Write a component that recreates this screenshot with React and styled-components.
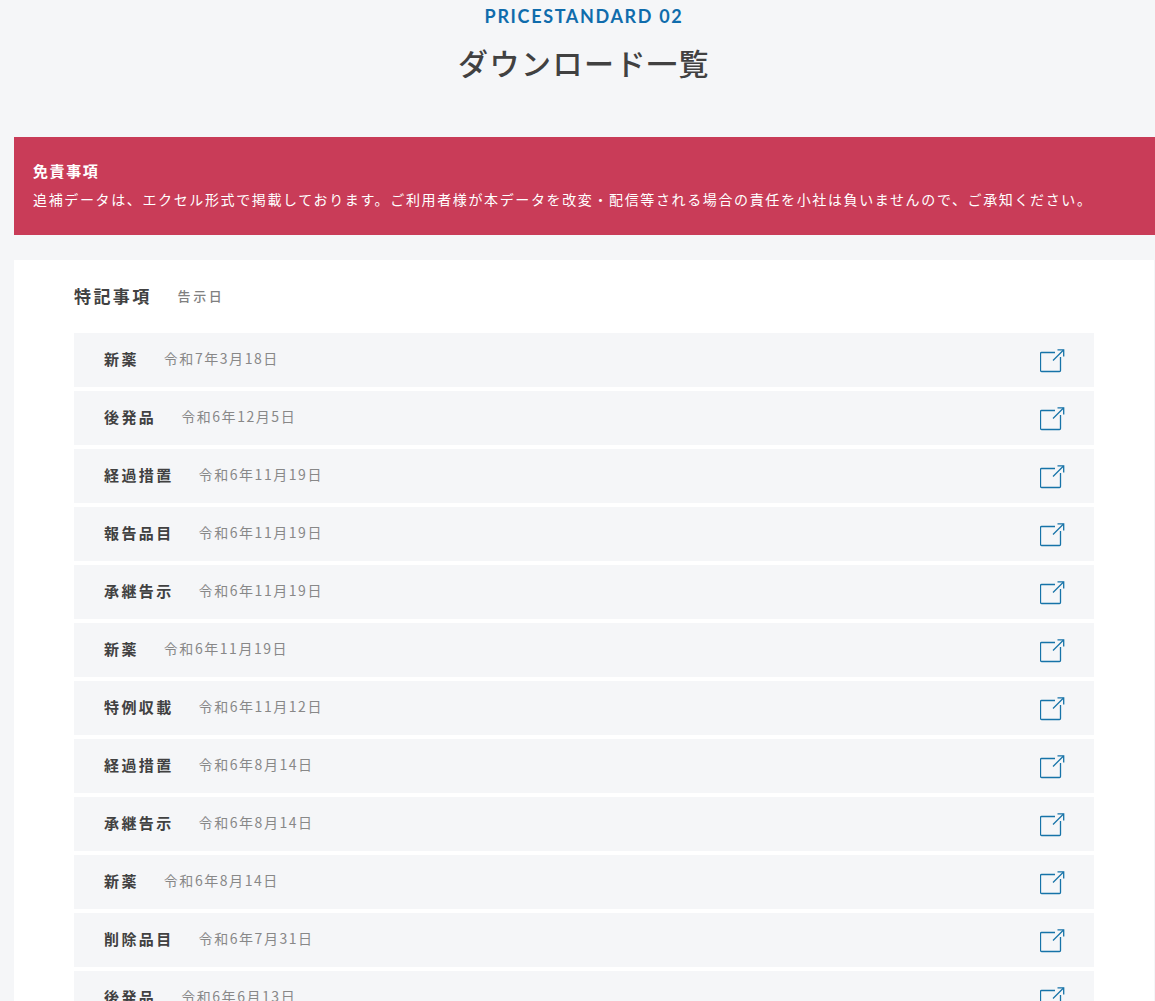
import React from "react";
import styled, { createGlobalStyle } from "styled-components";

const GlobalStyle = createGlobalStyle`
  html, body {
    margin: 0;
    padding: 0;
    height: 1001px;
    overflow: hidden;
    background-color: #f5f6f8;
    font-family: "Lato", "Noto Sans CJK JP", sans-serif;
    color: #414141;
  }
`;

const Page = styled.div`
  padding-left: 14px;
  padding-right: 1px;
`;

const Header = styled.header`
  height: 137px;
  text-align: center;

  p {
    margin: 0;
    padding-top: 5px;
    font-size: 18px;
    line-height: 22px;
    font-weight: 700;
    letter-spacing: 1.65px;
    color: #0f6cac;
  }

  h1 {
    margin: 14px 0 0;
    font-size: 30px;
    line-height: 45px;
    font-weight: 500;
    letter-spacing: 1.5px;
    color: #414141;
  }
`;

const Notice = styled.div`
  height: 98px;
  box-sizing: border-box;
  padding: 23px 19px 0;
  margin-right: -1px;
  background-color: #c93c58;
  color: #fff;

  strong {
    display: block;
    font-size: 15px;
    line-height: 22px;
    font-weight: 700;
    letter-spacing: 1.6px;
  }

  p {
    margin: 7px 0 0;
    font-size: 14px;
    line-height: 22px;
    font-weight: 400;
    letter-spacing: 1.63px;
    white-space: nowrap;
  }
`;

const Card = styled.section`
  margin-top: 25px;
  padding: 21px 60px 0;
  background-color: #fff;
`;

const ListHead = styled.div`
  display: flex;
  align-items: center;
  height: 29px;
  margin-bottom: 23px;

  h2 {
    margin: 0 26px 0 0;
    font-size: 17px;
    font-weight: 700;
    letter-spacing: 2.4px;
    color: #414141;
  }

  span {
    font-size: 13px;
    font-weight: 500;
    letter-spacing: 2.6px;
    color: #808080;
  }
`;

const List = styled.ul`
  display: flex;
  flex-direction: column;
  gap: 4px;
  margin: 0;
  padding: 0;
  list-style: none;
`;

const Row = styled.li`
  display: flex;
  align-items: center;
  height: 54px;
  padding: 0 29px 0 30px;
  background-color: #f5f6f8;
`;

const Name = styled.strong`
  margin-right: 25px;
  margin-bottom: 4px;
  font-size: 15px;
  font-weight: 700;
  letter-spacing: 2.4px;
  color: #414141;
`;

const DateText = styled.span`
  margin-bottom: 4px;
  font-family: "Noto Sans CJK JP", sans-serif;
  font-size: 14px;
  font-weight: 400;
  letter-spacing: 1.55px;
  color: #888;
`;

const LinkIcon = styled.svg`
  width: 25px;
  height: 24px;
  margin-left: auto;
  margin-top: 2px;
  fill: none;
  stroke: #1673a8;
  stroke-width: 1.3;
`;

const items = [
  ["新薬", "令和7年3月18日"],
  ["後発品", "令和6年12月5日"],
  ["経過措置", "令和6年11月19日"],
  ["報告品目", "令和6年11月19日"],
  ["承継告示", "令和6年11月19日"],
  ["新薬", "令和6年11月19日"],
  ["特例収載", "令和6年11月12日"],
  ["経過措置", "令和6年8月14日"],
  ["承継告示", "令和6年8月14日"],
  ["新薬", "令和6年8月14日"],
  ["削除品目", "令和6年7月31日"],
  ["後発品", "令和6年6月13日"],
];

const ExternalIcon = () => (
  <LinkIcon viewBox="0 0 25 24">
    <path d="M15 3.500H1.500a1 1 0 0 0-1 1v17a1 1 0 0 0 1 1h18a1 1 0 0 0 1-1V8" />
    <path d="M13 11.500L23.500 1" />
    <path d="M17.500 0.800H23.700V7.500" />
  </LinkIcon>
);

const App = () => {
  return (
    <Page>
      <GlobalStyle />
      <Header>
        <p>PRICESTANDARD 02</p>
        <h1>ダウンロード一覧</h1>
      </Header>
      <Notice>
        <strong>免責事項</strong>
        <p>追補データは、エクセル形式で掲載しております。ご利用者様が本データを改変・配信等される場合の責任を小社は負いませんので、ご承知ください。</p>
      </Notice>
      <Card>
        <ListHead>
          <h2>特記事項</h2>
          <span>告示日</span>
        </ListHead>
        <List>
          {items.map(([name, date], i) => (
            <Row key={i}>
              <Name>{name}</Name>
              <DateText>{date}</DateText>
              <ExternalIcon />
            </Row>
          ))}
        </List>
      </Card>
    </Page>
  );
};

export default App;
